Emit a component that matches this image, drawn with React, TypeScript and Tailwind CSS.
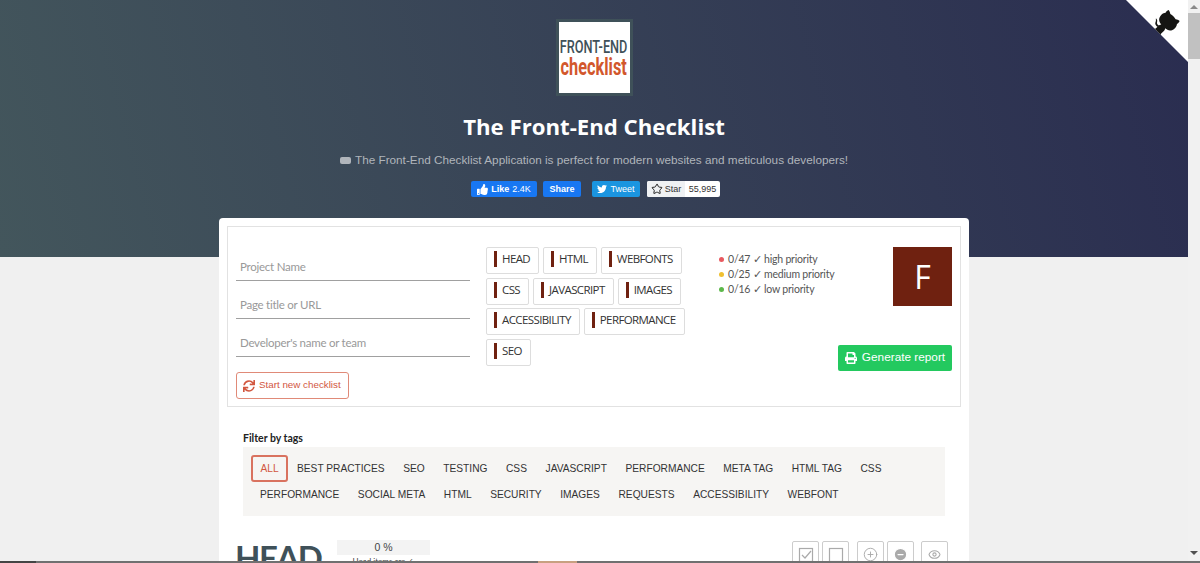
import { Eye, CirclePlus, CircleMinus, Star } from 'lucide-react';
import { FaPrint, FaSync, FaThumbsUp, FaTwitter } from 'react-icons/fa';

const sections = [
  ['HEAD', 'HTML', 'WEBFONTS'],
  ['CSS', 'JAVASCRIPT', 'IMAGES'],
  ['ACCESSIBILITY', 'PERFORMANCE'],
  ['SEO'],
];

const tagRows = [
  ['BEST PRACTICES', 'SEO', 'TESTING', 'CSS', 'JAVASCRIPT', 'PERFORMANCE', 'META TAG', 'HTML TAG', 'CSS'],
  ['PERFORMANCE', 'SOCIAL META', 'HTML', 'SECURITY', 'IMAGES', 'REQUESTS', 'ACCESSIBILITY', 'WEBFONT'],
];

const priorities = [
  { dot: 'bg-[#e8595f]', label: '0/47 ✓ high priority' },
  { dot: 'bg-[#f0c030]', label: '0/25 ✓ medium priority' },
  { dot: 'bg-[#5cb84a]', label: '0/16 ✓ low priority' },
];

function Field({ label }: { label: string }) {
  return (
    <div className="h-[38px] border-b border-[#a0a0a0] pl-[4px] pt-[12px] text-[11.5px] leading-[24px] tracking-[-0.25px] text-[#999]">{label}</div>
  );
}

function SectionChip({ label }: { label: string }) {
  return (
    <div className="flex h-[27px] items-center rounded-[2px] border border-[#ddd] bg-white pb-[3px] pl-[7px] pr-[8px] font-['Open_Sans',sans-serif] text-[11.5px] tracking-[-0.6px] text-[#333]">
      <span className="mr-[5px] h-[16px] w-[3px] bg-[#6f2110]" />
      {label}
    </div>
  );
}

function ToolButton({ children }: { children: React.ReactNode }) {
  return (
    <div className="flex h-[27px] w-[27px] items-center justify-center rounded-[2px] border border-[#ccc] text-[#aaa]">{children}</div>
  );
}

export default function App() {
  return (
    <div className="flex h-[563px] flex-col overflow-hidden bg-[#f0f0f0] font-['Lato','Liberation_Sans',sans-serif]">
      <div className="flex min-h-0 flex-1">
        <div className="relative min-w-0 flex-1 overflow-hidden">
          {/* Header */}
          <div className="flex h-[257px] flex-col items-center bg-[linear-gradient(75deg,#43565c,#2a2d50)] pt-[19px]">
            <div className="flex h-[77px] w-[77px] flex-col items-center justify-center overflow-hidden border-[3px] border-[#3f5159] bg-white font-['Roboto',sans-serif]">
              <span className="h-[19px] scale-x-[0.67] whitespace-nowrap text-[19px] font-medium leading-[19px] text-[#3f5159]">FRONT-END</span>
              <span className="h-[22px] scale-x-[0.68] whitespace-nowrap text-[24px] font-bold leading-[22px] text-[#d2572c]">checklist</span>
            </div>
            <h1 className="mt-[16px] font-['Open_Sans',sans-serif] text-[22.2px] font-bold leading-[30px] text-white">The Front-End Checklist</h1>
            <p className="mt-[9px] flex items-center font-['Liberation_Sans',sans-serif] text-[11.75px] leading-[18px] text-[#b0b5bb]">
              <span className="mr-[4px] h-[7px] w-[11px] rounded-[2px] bg-[#b0b5bb]" />
              The Front-End Checklist Application is perfect for modern websites and meticulous developers!
            </p>
            <div className="ml-[3px] mt-[12px] flex h-[16px] items-center font-['Liberation_Sans',sans-serif] text-[9px] font-bold leading-none text-white">
              <div className="flex h-[16px] w-[66px] items-center justify-center gap-[3px] rounded-[2px] bg-[#1877f2]">
                <FaThumbsUp size={11} />
                Like <span className="font-normal">2.4K</span>
              </div>
              <div className="ml-[6px] flex h-[16px] w-[38px] items-center justify-center rounded-[2px] bg-[#1877f2]">Share</div>
              <div className="ml-[11px] flex h-[16px] w-[48px] items-center justify-center gap-[3px] rounded-[2px] bg-[#1b95e0] font-normal">
                <FaTwitter size={10} />
                Tweet
              </div>
              <div className="ml-[7px] flex h-[16px] w-[73px] overflow-hidden rounded-[2px] bg-white text-[#333]">
                <div className="flex w-[38px] items-center justify-center gap-[2px] bg-[#eff1f3] font-normal">
                  <Star size={12} color="#222" />
                  Star
                </div>
                <div className="flex flex-1 items-center justify-center font-normal">55,995</div>
              </div>
            </div>
          </div>

          {/* GitHub corner */}
          <svg viewBox="0 0 250 250" className="absolute right-0 top-0 h-[62px] w-[62px]">
            <path d="M0,0 L250,250 L250,0 Z" fill="#ffffff" />
            <path
              d="M128.3,109.0 C113.8,99.7 119.0,89.6 119.0,89.6 C122.0,82.7 120.5,78.6 120.5,78.6 C119.2,72.0 123.4,76.3 123.4,76.3 C127.3,80.9 125.5,87.3 125.5,87.3 C122.9,97.6 130.6,101.9 134.4,103.2"
              fill="#151513"
            />
            <path
              d="M115.0,115.0 C114.9,115.1 118.7,116.5 119.8,115.4 L133.7,101.6 C136.9,99.2 139.9,98.4 142.2,98.6 C133.8,88.0 127.5,74.4 143.8,58.0 C148.5,53.4 154.0,51.2 159.7,51.0 C160.3,49.4 163.2,43.6 171.4,40.1 C171.4,40.1 176.1,42.5 178.8,56.2 C183.1,58.6 187.2,61.8 190.9,65.4 C194.5,69.0 197.7,73.2 200.1,77.6 C213.8,80.2 216.3,84.9 216.3,84.9 C212.7,93.1 206.9,96.0 205.4,96.6 C205.1,102.4 203.0,107.8 198.3,112.5 C181.9,128.9 168.3,122.5 157.7,114.1 C157.9,116.9 156.7,120.9 152.7,124.9 L141.0,136.5 C139.8,137.7 141.6,141.9 141.8,141.8 Z"
              fill="#151513"
            />
          </svg>

          {/* Main card */}
          <div className="relative mx-auto -mt-[39px] h-[400px] w-[750px] rounded-[4px] bg-white p-[8px]">
            <div className="flex h-[181px] border border-[#e2e2e2]">
              <div className="w-[251px] pl-[8px] pt-[16px]">
                <div className="w-[234px]">
                  <Field label="Project Name" />
                  <Field label="Page title or URL" />
                  <Field label="Developer's name or team" />
                </div>
                <div className="mt-[15px] flex h-[27px] w-[113px] items-center gap-[4px] rounded-[3px] border border-[#e08a78] pl-[6px] font-['Liberation_Sans',sans-serif] text-[9.8px] text-[#d2573f]">
                  <FaSync size={12} />
                  Start new checklist
                </div>
              </div>
              <div className="mt-[20px] flex w-[232px] flex-col gap-[3.5px] pl-[7px]">
                {sections.map((row) => (
                  <div key={row[0]} className="flex gap-[4px]">
                    {row.map((s) => (
                      <SectionChip key={s} label={s} />
                    ))}
                  </div>
                ))}
              </div>
              <div className="flex flex-1 flex-col">
                <div className="flex justify-between">
                  <div className="ml-[8px] mt-[25px] text-[10.5px] leading-[15px] tracking-[-0.2px] text-[#555]">
                    {priorities.map((p) => (
                      <div key={p.label} className="flex items-center gap-[4px]">
                        <span className={`h-[5px] w-[5px] rounded-full ${p.dot}`} />
                        {p.label}
                      </div>
                    ))}
                  </div>
                  <div className="mr-[8px] mt-[20px] flex h-[59px] w-[59px] items-center justify-center bg-[#6f2110] font-['Open_Sans',sans-serif] text-[32px] leading-none text-white">F</div>
                </div>
                <div className="mr-[8px] mt-[39px] flex h-[26px] w-[114px] items-center justify-center gap-[5px] self-end rounded-[2px] bg-[#23c95f] font-['Liberation_Sans',sans-serif] text-[11.8px] text-white">
                  <FaPrint size={12} />
                  Generate report
                </div>
              </div>
            </div>

            {/* Filter by tags */}
            <div className="ml-[16px] mt-[24px] text-[10.5px] font-bold leading-[14px] text-[#222]">Filter by tags</div>
            <div className="ml-[16px] mt-[2px] h-[69px] w-[702px] bg-[#f6f5f3] pl-[8px] pt-[8px] font-['Liberation_Sans',sans-serif] text-[10.2px] text-[#333]">
              <div className="flex h-[27px] items-center gap-[18.6px]">
                <div className="-mr-[9.6px] flex h-[27px] w-[37px] items-center justify-center rounded-[3px] border-2 border-[#d9725f] text-[#d2573f]">ALL</div>
                {tagRows[0].map((t, i) => (
                  <span key={i}>{t}</span>
                ))}
              </div>
              <div className="-mt-[1px] flex h-[27px] items-center gap-[18.6px] pl-[9px]">
                {tagRows[1].map((t) => (
                  <span key={t}>{t}</span>
                ))}
              </div>
            </div>

            {/* Head section */}
            <div className="mt-[24px] flex">
              <div className="ml-[8px] w-[102px] text-[33px] font-bold leading-[34px] tracking-[-1.5px] text-[#3f5159]">HEAD</div>
              <div className="w-[93px] text-center">
                <div className="h-[15px] bg-[#f3f3f3] font-['Liberation_Sans',sans-serif] text-[10.5px] leading-[15px] text-[#444]">0 %</div>
                <div className="mt-[1px] text-[8px] leading-[10px] text-[#444]">Head items are ✓</div>
              </div>
              <div className="ml-[362px] mt-[1px] flex gap-[3px]">
                <ToolButton>
                  <svg viewBox="0 0 16 16" className="h-[16px] w-[16px]" fill="none" stroke="currentColor" strokeWidth="1.2">
                    <rect x="1.500" y="1.500" width="13" height="13" />
                    <path d="M4 8l3 3 6-7" />
                  </svg>
                </ToolButton>
                <ToolButton>
                  <svg viewBox="0 0 16 16" className="h-[16px] w-[16px]" fill="none" stroke="currentColor" strokeWidth="1.2">
                    <rect x="1.500" y="1.500" width="13" height="13" />
                  </svg>
                </ToolButton>
                <div className="w-[2px]" />
                <ToolButton><CirclePlus size={15} strokeWidth={1.5} /></ToolButton>
                <ToolButton><CircleMinus size={15} fill="#aaa" color="#fff" /></ToolButton>
                <div className="w-[1px]" />
                <ToolButton><Eye size={13} /></ToolButton>
              </div>
            </div>
          </div>
        </div>

        {/* Scrollbar */}
        <div className="flex w-[12px] shrink-0 flex-col items-center bg-[#f1f1f1] pb-[6px] pt-[5px]">
          <div className="h-0 w-0 border-x-[4px] border-b-[4px] border-x-transparent border-b-[#8a8a8a]" />
          <div className="mt-[4px] h-[46px] w-full bg-[#c1c1c1]" />
          <div className="mt-auto h-0 w-0 border-x-[4px] border-t-[4px] border-x-transparent border-t-[#505050]" />
        </div>
      </div>
      {/* Bottom edge */}
      <div className="flex h-[2px] shrink-0 bg-[#707070]">
        <div className="w-[36px] bg-[#444]" />
        <div className="ml-[502px] w-[39px] bg-[#c8a080]" />
      </div>
    </div>
  );
}
